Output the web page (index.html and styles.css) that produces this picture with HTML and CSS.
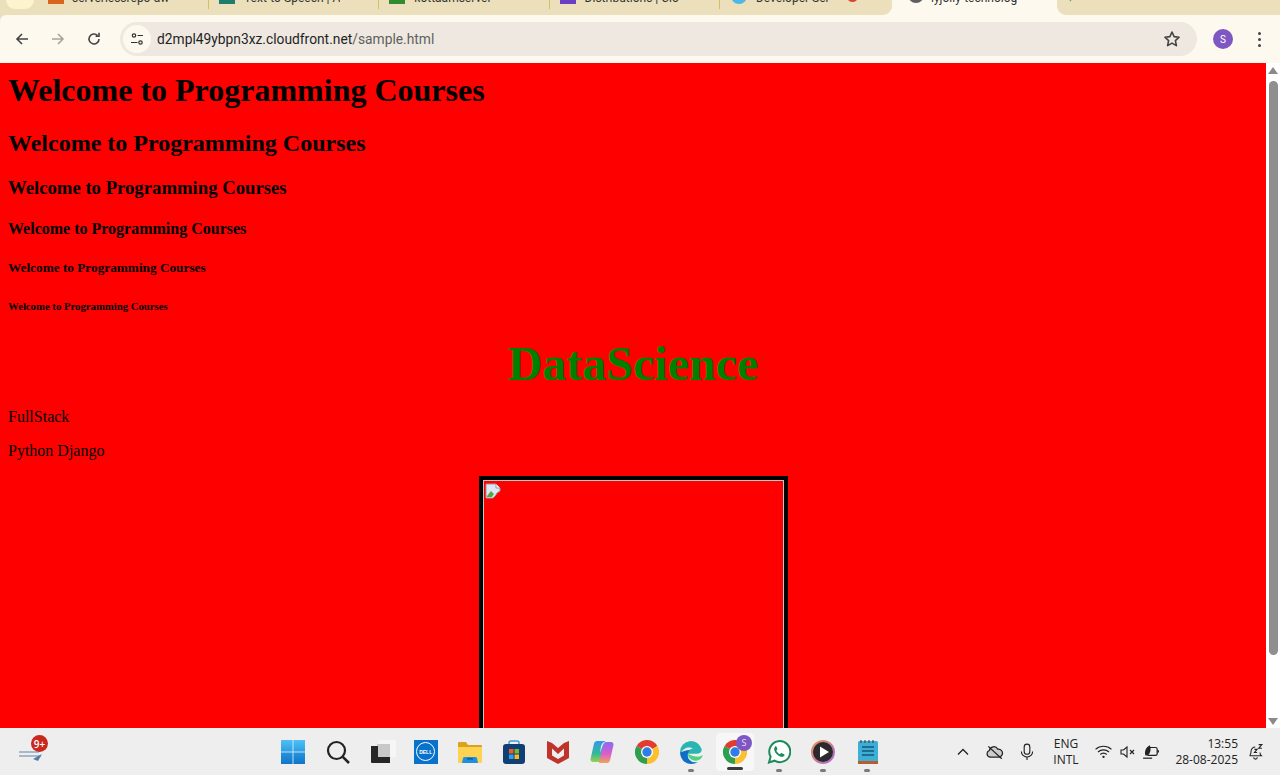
FILE: index.html
```html
<!DOCTYPE html>
<html lang="en">
<head>
<meta charset="utf-8">
<title>Welcome to Programming Courses</title>
<link rel="stylesheet" href="styles.css">
</head>
<body>
<svg class="defs" width="0" height="0" aria-hidden="true">
  <defs>
    <linearGradient id="copilot-left" x1="0" y1="0" x2="0" y2="1"><stop offset="0" stop-color="#2f9be6"/><stop offset="0.6" stop-color="#35b89a"/><stop offset="1" stop-color="#9ccf4e"/></linearGradient>
    <linearGradient id="copilot-right" x1="0" y1="0" x2="0" y2="1"><stop offset="0" stop-color="#8a6cf0"/><stop offset="0.55" stop-color="#d85cd0"/><stop offset="1" stop-color="#f2a15a"/></linearGradient>
    <linearGradient id="player-ring" x1="0" y1="0" x2="1" y2="1"><stop offset="0" stop-color="#e8944e"/><stop offset="1" stop-color="#a66ad8"/></linearGradient>
    <linearGradient id="win-top" x1="0" y1="0" x2="0" y2="1"><stop offset="0" stop-color="#4ec0f2"/><stop offset="1" stop-color="#2b9fe6"/></linearGradient>
    <linearGradient id="win-bottom" x1="0" y1="0" x2="0" y2="1"><stop offset="0" stop-color="#2495e0"/><stop offset="1" stop-color="#1074c8"/></linearGradient>
  </defs>
  <symbol id="chrome" viewBox="0 0 24 24">
    <path fill="#e23c30" d="M12 12L22.4 6A12 12 0 0 0 1.6 6Z"/>
    <path fill="#fbc02d" d="M12 12L12 24A12 12 0 0 0 22.4 6Z"/>
    <path fill="#2e9e4f" d="M12 12L1.6 6A12 12 0 0 0 12 24Z"/>
    <circle cx="12" cy="12" r="6" fill="#fff"/>
    <circle cx="12" cy="12" r="4.7" fill="#2f7de8"/>
  </symbol>
</svg>
<div class="window">
  <div class="strip">
    <div class="tabs-left">
      <span class="pill"></span>
      <div class="tab tab-first"><span class="favicon fav-orange"></span><span class="tab-title">serverlessrepo-aw</span></div>
      <div class="tab"><span class="sep"></span><span class="favicon fav-teal"></span><span class="tab-title">Text-to-Speech | A</span></div>
      <div class="tab"><span class="sep"></span><span class="favicon fav-green"></span><span class="tab-title">kottaamserver</span></div>
      <div class="tab"><span class="sep"></span><span class="favicon fav-purple"></span><span class="tab-title">Distributions | Clo</span></div>
      <div class="tab"><span class="sep"></span><span class="favicon fav-blue"></span><span class="tab-title tab-short">Developer Ser</span><span class="rec"></span></div>
    </div>
    <div class="tab-active"><span class="favicon fav-grey"></span><span class="tab-title">lyjolly-technolog</span></div>
    <div class="tabs-right"><span class="plus">+</span></div>
  </div>

  <div class="toolbar">
    <div class="navs">
      <svg class="nav-icon" viewBox="0 0 16 16"><path d="M14 8H3M8 3L3 8l5 5" fill="none" stroke="#444" stroke-width="1.6"/></svg>
      <svg class="nav-icon" viewBox="0 0 16 16"><path d="M2 8h11M8 3l5 5-5 5" fill="none" stroke="#a8a49c" stroke-width="1.6"/></svg>
      <svg class="nav-icon" viewBox="0 0 16 16"><path d="M13 8a5 5 0 1 1-1.6-3.7M13 1.8v3.4H9.6" fill="none" stroke="#444" stroke-width="1.6"/></svg>
    </div>
    <div class="omnibox">
      <span class="chip"><svg class="chip-icon" viewBox="0 0 14 14"><circle cx="4" cy="3.5" r="1.7" fill="none" stroke="#333" stroke-width="1.2"/><path d="M7.5 3.5H13M1 10.5h6.5" stroke="#333" stroke-width="1.2"/><circle cx="10.5" cy="10.5" r="1.7" fill="none" stroke="#333" stroke-width="1.2"/></svg></span>
      <span class="url">d2mpl49ybpn3xz.cloudfront.net<span class="url-path">/sample.html</span></span>
      <svg class="star" viewBox="0 0 18 18"><path d="M9 2l2.1 4.6 5 .6-3.7 3.4 1 5L9 13.1l-4.4 2.5 1-5L1.900 7.200l5-.6z" fill="none" stroke="#444" stroke-width="1.6" stroke-linejoin="round"/></svg>
    </div>
    <span class="avatar">S</span>
    <span class="kebab"><i></i><i></i><i></i></span>
  </div>

  <div class="viewport">
    <main class="content">
      <h1 class="first">Welcome to Programming Courses</h1>
      <h2>Welcome to Programming Courses</h2>
      <h3>Welcome to Programming Courses</h3>
      <h4>Welcome to Programming Courses</h4>
      <h5>Welcome to Programming Courses</h5>
      <h6>Welcome to Programming Courses</h6>
      <div class="headline">DataScience</div>
      <p>FullStack</p>
      <p class="last-line">Python Django</p>
      <div class="picture-row">
        <div class="picture">
          <div class="picture-inner">
            <svg class="broken" viewBox="0 0 16 16"><path d="M1 1h10l4 4v3l-3 2-2 3-2 2H1z" fill="#dfe6f4" stroke="#9a9a9a" stroke-width="1"/><path d="M2 13l4-5 3 3-2 3H2z" fill="#55a84a"/><path d="M11 1v4h4" fill="#fff" stroke="#9a9a9a"/></svg>
          </div>
        </div>
      </div>
    </main>
    <div class="scrollbar">
      <span class="arrow-up"></span>
      <span class="thumb"></span>
      <span class="arrow-down"></span>
    </div>
  </div>

  <footer class="taskbar">
    <div class="widgets">
      <svg class="widget-icon" viewBox="0 0 26 16"><path d="M0 7h20M0 11h22" stroke="#8fa6bd" stroke-width="1.500"/><path d="M14 14l9-5-4 7z" fill="#4f7da8"/></svg>
      <span class="badge">9+</span>
    </div>
    <div class="apps">
      <div class="app"><svg class="icon" viewBox="0 0 24 24"><rect width="11.600" height="11.600" fill="url(#win-top)"/><rect x="12.400" width="11.600" height="11.600" fill="url(#win-top)"/><rect y="12.400" width="11.600" height="11.600" fill="url(#win-bottom)"/><rect x="12.400" y="12.400" width="11.600" height="11.600" fill="url(#win-bottom)"/></svg></div>
      <div class="app"><svg class="icon icon-search" viewBox="0 0 24 24"><circle cx="10.500" cy="10.500" r="8.500" fill="none" stroke="#222" stroke-width="2.200"/><path d="M16.800 16.800L23 23" stroke="#222" stroke-width="2.600"/></svg></div>
      <div class="app"><svg class="icon icon-tasks" viewBox="0 0 25 24"><rect x="8" y="0" width="17" height="17" rx="1.500" fill="#f6f6f6"/><rect x="6" y="4" width="13" height="13" fill="#c9c9c9"/><path d="M0 6h7v11h12v6H1a1 1 0 0 1-1-1z" fill="#262626"/></svg></div>
      <div class="app"><div class="dell"><span class="dell-ring">DELL</span></div></div>
      <div class="app"><svg class="icon" viewBox="0 0 24 24"><path d="M0 3a1 1 0 0 1 1-1h7l2 3h13a1 1 0 0 1 1 1v2H0z" fill="#dba21f"/><path d="M0 7h24v15a1 1 0 0 1-1 1H1a1 1 0 0 1-1-1z" fill="#fdd34f"/><path d="M4 23l1-5a2 2 0 0 1 2-1h10a2 2 0 0 1 2 1l1 5z" fill="#1f8fe0"/><rect x="9" y="18" width="6" height="1.600" fill="#0f5fa8"/></svg></div>
      <div class="app"><svg class="icon" viewBox="0 0 24 24"><path d="M7 5V3a2 2 0 0 1 2-2h6a2 2 0 0 1 2 2v2" fill="none" stroke="#3f9bd8" stroke-width="1.500"/><rect x="1" y="4" width="22" height="20" rx="3" fill="#123f73"/><rect x="7" y="9" width="4.500" height="4.500" fill="#ee5a30"/><rect x="12.500" y="9" width="4.500" height="4.500" fill="#79b82a"/><rect x="7" y="14.500" width="4.500" height="4.500" fill="#2aa2ea"/><rect x="12.500" y="14.500" width="4.500" height="4.500" fill="#f9b81c"/></svg></div>
      <div class="app"><svg class="icon" viewBox="0 0 24 24"><path d="M1 1l5 2 6 5 6-5 5-2v17l-11 6L1 18z" fill="#c0332b"/><path d="M6 8.500l6 5.500 6-5.500v7l-6 3.500-6-3.500z" fill="#eeeeee"/></svg></div>
      <div class="app"><svg class="icon" viewBox="0 0 24 24"><path d="M7 1h8l-5 21H3a2.500 2.500 0 0 1-2.400-3.200L4 3.500C4.500 2 5.500 1 7 1z" fill="url(#copilot-left)"/><path d="M17 23H9l5-21h7a2.500 2.500 0 0 1 2.400 3.200L20 20.500c-.5 1.500-1.500 2.500-3 2.500z" fill="url(#copilot-right)"/><path d="M10 13l2.500-7c.5-1.500 1.500-3 3-4h-1.500c-1.500 1-2.500 2.500-3 4z" fill="#e8e6f8"/></svg></div>
      <div class="app"><svg class="icon"><use href="#chrome"/></svg></div>
      <div class="app"><svg class="icon" viewBox="0 0 24 24"><path d="M1 12a11 11 0 0 1 21.500-3.200c.8 3-1.500 5-5 5H9c-.2-3 2-5 5-5-3-3-10-1-12 4z" fill="#2ab5b5"/><path d="M1 12c0 7 5 12 11 12 3 0 5-1 7-2-5 1-9-1-10-5-.6-2 0-5 2-7-5 0-9 3-10 2z" fill="#0f6fc6"/><path d="M9 14c0 5 6 8 11 6 2-1 3-3 4-5-1 1-4 2-7 1.500C13 16 9 14 9 14z" fill="#4fd27e"/></svg><span class="dot"></span></div>
      <div class="app app-active"><svg class="icon"><use href="#chrome"/></svg><span class="mini-badge">S</span><span class="bar"></span></div>
      <div class="app"><svg class="icon" viewBox="0 0 24 24"><path d="M2 22.500l1.600-5.800A10.500 10.500 0 1 1 7.500 20.700z" fill="#fff" stroke="#1d8a5a" stroke-width="2"/><path d="M8.300 6.800c-1 .7-1.400 2-1 3.400.9 3 3.600 5.700 6.600 6.600 1.400.4 2.700 0 3.400-1 .4-.6.300-1.300-.3-1.600l-2-1c-.5-.2-1-.1-1.300.3l-.6.7c-1.700-.7-3-2-3.800-3.800l.7-.6c.4-.3.500-.8.300-1.300l-1-2c-.3-.6-1-.7-1-.7z" fill="#1d8a5a"/></svg><span class="dot"></span></div>
      <div class="app"><svg class="icon" viewBox="0 0 24 24"><circle cx="12" cy="12" r="11" fill="#2a2a2e" stroke="url(#player-ring)" stroke-width="2"/><path d="M9 6.500l9 5.500-9 5.500z" fill="#fff"/></svg><span class="dot"></span></div>
      <div class="app"><svg class="icon" viewBox="0 0 24 24"><rect x="2" y="1" width="20" height="21" rx="1.500" fill="#3eaed6"/><path d="M5 0v3M9 0v3M13 0v3M17 0v3" stroke="#333" stroke-width="1"/><path d="M6 7h12M6 11h12M6 15h12" stroke="#12597a" stroke-width="1.400"/><rect x="2" y="21" width="20" height="3" fill="#b5602a"/></svg><span class="dot"></span></div>
    </div>
    <div class="tray">
      <svg class="tray-icon tray-chevron" viewBox="0 0 16 16"><path d="M3 10.500l5-5 5 5" fill="none" stroke="#222" stroke-width="1.300"/></svg>
      <svg class="tray-icon tray-cloud" viewBox="0 0 16 16"><path d="M3.500 12.500a3 3 0 0 1-.5-5.800 4 4 0 0 1 7.500-1.200 3.500 3.500 0 0 1 3 6 2 2 0 0 1-1.500 1z" fill="#ccc" stroke="#222" stroke-width="1.100"/><path d="M2 3l12 11" stroke="#222" stroke-width="1.100"/></svg>
      <svg class="tray-icon tray-mic" viewBox="0 0 16 16"><rect x="5.500" y="1" width="5" height="9" rx="2.500" fill="none" stroke="#222"/><path d="M3 7.500a5 5 0 0 0 10 0M8 12.500V15" fill="none" stroke="#222"/></svg>
      <div class="lang"><span>ENG</span><span>INTL</span></div>
      <svg class="tray-icon tray-wifi" viewBox="0 0 16 16"><path d="M.5 6a11 11 0 0 1 15 0M2.800 8.500a7.500 7.500 0 0 1 10.400 0M5 10.800a4.200 4.200 0 0 1 6 0" fill="none" stroke="#222" stroke-width="1.100"/><circle cx="8" cy="13" r="1.100" fill="#222"/></svg>
      <svg class="tray-icon tray-sound" viewBox="0 0 16 16"><path d="M1 6v4h2.500L7 13V3L3.500 6z" fill="none" stroke="#222" stroke-width="1.100"/><path d="M10 6l4 4M14 6l-4 4" stroke="#222" stroke-width="1.100"/></svg>
      <svg class="tray-icon tray-battery" viewBox="0 0 16 16"><path d="M5 4h7a1.500 1.500 0 0 1 1.500 1.500v4A1.500 1.500 0 0 1 12 11H5" fill="none" stroke="#222" stroke-width="1.100"/><path d="M14.500 6.500v2" stroke="#222" stroke-width="1.200"/><path d="M3 11c-1-3 0-7 4-9 1 3 1 7-2 9z" fill="#222"/><path d="M1 13.500h8" stroke="#222" stroke-width="1.100"/></svg>
      <div class="clock"><span>13:55</span><span>28-08-2025</span></div>
      <svg class="tray-icon tray-bell" viewBox="0 0 16 16"><path d="M2.500 12c1-1 1.300-2 1.300-4a4 4 0 0 1 4-4.200M2.500 12h11c-1-.8-1.200-1.600-1.300-3M6.300 13.500a1.700 1.700 0 0 0 3.400 0" fill="none" stroke="#222" stroke-width="1"/><path d="M7 6h2.500L7 9h2.500M11 1.500h3l-3 3.500h3" fill="none" stroke="#222" stroke-width="1"/></svg>
    </div>
  </footer>
</div>
</body>
</html>
```
FILE: styles.css
```css
* { box-sizing: border-box; }
html, body { margin: 0; height: 100%; overflow: hidden; }
.defs { position: absolute; }
.window {
  height: 775px;
  display: flex;
  flex-direction: column;
  overflow: hidden;
  background: #ebe0bb;
  font-family: Roboto, "Liberation Sans", sans-serif;
}

/* tab strip (cropped at the top of the shot) */
.strip { height: 15px; flex: none; display: flex; overflow: hidden; background: #fdf9ee; }
.tabs-left {
  width: 892px;
  flex: none;
  display: flex;
  background: #ebe0bb;
  border-bottom-right-radius: 9px;
}
.tabs-right { flex: 1; background: #ebe0bb; border-bottom-left-radius: 9px; padding-left: 10px; }
.plus { display: block; margin-top: -9px; font-size: 12px; color: #777; }
.pill {
  width: 28px; height: 25px; flex: none;
  margin: -16px 3px 0 6px;
  border-radius: 9px;
  background: #fdf3cf;
}
.tab {
  width: 170.300px;
  height: 30px;
  flex: none;
  margin-top: -19px;
  display: flex;
  align-items: center;
  gap: 9px;
  overflow: hidden;
}
.tab-first { padding-left: 11px; gap: 8px; width: 171px; }
.sep { width: 1px; height: 18px; margin-top: 7px; background: #d8bf58; flex: none; margin-right: 1px; }
.favicon { width: 16px; height: 16px; flex: none; }
.fav-orange { background: #d9651c; }
.fav-teal { background: #1e7d6b; }
.fav-green { background: #2e8b2e; }
.fav-purple { background: #6b3fc4; }
.fav-blue { background: #4fb6e8; border-radius: 50%; margin-left: 1px; }
.fav-grey { background: #5f5f5f; border-radius: 50%; margin-top: -3px; }
.tab-title { font-size: 12px; line-height: 16px; margin-top: 3px; color: #333; white-space: nowrap; overflow: hidden; }
.tab-short { width: 82px; }
.rec { width: 11px; height: 11px; border-radius: 50%; background: #d9443a; flex: none; }
.tab-active {
  width: 165px;
  height: 30px;
  flex: none;
  margin-top: -19px;
  padding-left: 16px;
  display: flex;
  align-items: center;
  gap: 7px;
  overflow: hidden;
}

/* toolbar */
.toolbar {
  height: 48px;
  flex: none;
  display: flex;
  align-items: center;
  background: #fdf9ee;
  border-top-left-radius: 6px;
  padding: 0 0 0 14px;
}
.navs { display: flex; gap: 20px; width: 106px; flex: none; }
.nav-icon { width: 16px; height: 16px; display: block; }
.omnibox {
  width: 1077px;
  height: 34px;
  flex: none;
  display: flex;
  align-items: center;
  border-radius: 17px;
  background: #eee8e1;
  padding: 0 16px 0 3px;
}
.chip {
  width: 28px; height: 28px; flex: none;
  display: flex; align-items: center; justify-content: center;
  border-radius: 50%;
  background: #fdf9ee;
  margin-right: 6px;
}
.chip-icon { width: 14px; height: 14px; }
.url { flex: 1; font-size: 13.8px; color: #1f1f1f; white-space: nowrap; }
.url-path { color: #5f5f5f; }
.star { width: 18px; height: 18px; flex: none; }
.avatar {
  width: 20px; height: 20px; flex: none;
  margin-left: 16px;
  border-radius: 50%;
  background: #7e57c2;
  color: #fff;
  font-size: 10px;
  display: flex; align-items: center; justify-content: center;
}
.kebab { margin-left: 25px; display: flex; flex-direction: column; gap: 3px; flex: none; }
.kebab i { display: block; width: 3px; height: 3px; border-radius: 50%; background: #444; }

/* page viewport */
.viewport { height: 665px; flex: none; display: flex; overflow: hidden; }
.content {
  flex: 1;
  min-width: 0;
  padding: 9px 8px 8px;
  background: #f00;
  color: #000;
  font-family: "Liberation Serif", serif;
  overflow: hidden;
}
h1 { font-size: 32px; margin: 21.44px 0; }
h1.first { margin-top: 0; }
h2 { font-size: 24px; margin: 19.92px 0; }
h3 { font-size: 18.72px; margin: 18.72px 0 17.72px; }
h4 { font-size: 16px; margin: 20.28px 0; }
h5 { font-size: 13.28px; margin: 22.18px 0; }
h6 { font-size: 10.72px; margin: 24px 0; }
.headline {
  font-size: 48px;
  font-weight: bold;
  color: #008000;
  text-align: center;
  margin: 24.5px 0 17px;
}
p { font-size: 16px; margin: 16px 0; }
p.last-line { margin-bottom: 15.5px; }
.picture-row { display: flex; justify-content: center; }
.picture { width: 309px; height: 310px; flex: none; border: 4px solid #000; }
.picture-inner { height: 100%; border: 1px solid #c4c4c4; padding: 2px 1px; }
.broken { width: 16px; height: 16px; display: block; }

/* scrollbar */
.scrollbar {
  width: 14px;
  flex: none;
  background: #fff;
  display: flex;
  flex-direction: column;
  align-items: center;
}
.arrow-up, .arrow-down { width: 0; height: 0; flex: none; border-left: 5px solid transparent; border-right: 5px solid transparent; }
.arrow-up { border-bottom: 7px solid #8a8a8a; margin-top: 4px; }
.thumb { width: 9px; height: 574px; flex: none; margin-top: 7px; background: #8f8f8f; border-radius: 5px; }
.arrow-down { border-top: 7px solid #8a8a8a; margin-top: 63px; }

/* taskbar */
.taskbar {
  height: 47px;
  flex: none;
  display: flex;
  align-items: center;
  background: #eeeeee;
  color: #222;
  font-family: "Open Sans", "Noto Sans", sans-serif;
}
.widgets { position: relative; width: 271px; flex: none; height: 100%; }
.widget-icon { position: absolute; left: 19px; top: 17px; width: 26px; height: 16px; }
.badge {
  position: absolute; left: 31px; top: 7px;
  width: 17px; height: 17px;
  border-radius: 50%;
  background: #c8281e;
  color: #fff;
  font-size: 10px;
  font-weight: 600;
  display: flex; align-items: center; justify-content: center;
}
.apps { display: flex; flex: none; width: 618px; }
.app {
  position: relative;
  width: 44.200px;
  height: 38px;
  flex: none;
  display: flex; align-items: center; justify-content: center;
  border-radius: 4px;
}
.app-active { width: 38px; margin: 0 3.100px; background: #f7f7f7; }
.icon { width: 24px; height: 24px; display: block; }
.icon-search { margin-left: 2px; }
.icon-tasks { width: 25px; margin-left: 4px; }
.dell {
  width: 24px; height: 24px;
  background: #0672cb;
  display: flex; align-items: center; justify-content: center;
}
.dell-ring {
  width: 19px; height: 19px;
  border: 1px solid #fff;
  border-radius: 50%;
  color: #fff;
  font-size: 5px;
  font-weight: 700;
  display: flex; align-items: center; justify-content: center;
  font-family: "Liberation Sans", sans-serif;
}
.dot { position: absolute; left: 19px; bottom: -1px; width: 6px; height: 3px; border-radius: 2px; background: #7a7a7a; }
.bar { position: absolute; left: 11px; bottom: 1px; width: 16px; height: 3px; border-radius: 2px; background: #3a3a3a; }
.mini-badge {
  position: absolute; left: 20px; top: 2px;
  width: 16px; height: 16px;
  border-radius: 50%;
  background: #7e57c2;
  color: #e8dcf8;
  font-size: 9px;
  display: flex; align-items: center; justify-content: center;
}
.tray { flex: 1; display: flex; align-items: center; height: 100%; min-width: 0; }
.tray-icon { width: 16px; height: 16px; flex: none; display: block; }
.tray-chevron { margin-left: 66px; }
.tray-cloud { margin-left: 15px; width: 18px; height: 18px; }
.tray-mic { margin-left: 14px; width: 18px; height: 18px; }
.lang { width: 50px; margin-left: 5px; display: flex; flex-direction: column; align-items: center; font-size: 12px; line-height: 16px; }
.tray-wifi { margin-left: 4px; width: 17px; height: 17px; }
.tray-sound { margin-left: 8px; }
.tray-battery { margin-left: 6px; width: 18px; height: 18px; }
.clock { width: 78px; display: flex; flex-direction: column; align-items: flex-end; font-size: 12px; line-height: 16px; }
.tray-bell { margin-left: 9px; width: 17px; height: 17px; }
```
